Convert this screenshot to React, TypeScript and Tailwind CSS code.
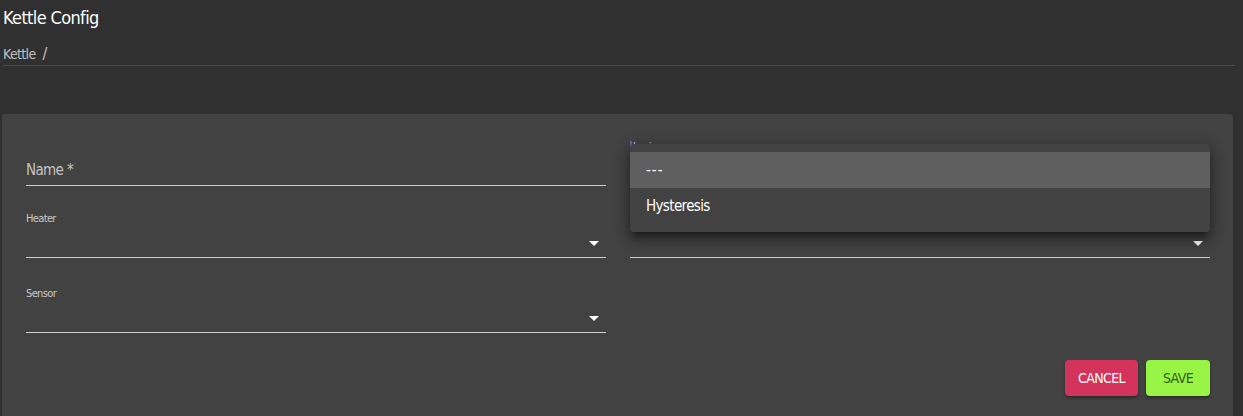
import React from "react";

const font = { fontFamily: '"DejaVu Sans Condensed", "Liberation Sans", sans-serif', letterSpacing: "-0.04em" };

function Arrow() {
  return (
    <svg width="10" height="5" viewBox="0 0 10 5" className="absolute right-[7px] bottom-[11px]">
      <path d="M0 0 L10 0 L5 5 Z" fill="#ffffff" />
    </svg>
  );
}

function SelectField({ label }: { label: string }) {
  return (
    <div className="flex flex-col">
      <div className="text-[11px] leading-[13px] text-[#c8c8c8] h-[13px]">{label}</div>
      <div className="relative h-[33px] border-b border-[#d0d0d0]">
        <Arrow />
      </div>
    </div>
  );
}

export default function App() {
  return (
    <div className="w-full h-[416px] bg-[#303030] overflow-hidden text-white" style={font}>
      <div className="pl-[3px] pr-[8px]">
        <div className="text-[18px] leading-[24px] pt-[6px] text-white">Kettle Config</div>
        <div className="flex items-center gap-[7px] text-[14px] leading-[18px] pt-[15px] pb-[2px] text-[#c0c0c0]">
          <span>Kettle</span>
          <span className="text-[16px]">/</span>
        </div>
        <div className="h-[1px] bg-[#4a4a4a] mr-0 w-[1232px]"></div>
      </div>
      <div className="mt-[48px] ml-[2px] w-[1231px] h-[320px] bg-[#424242] rounded-t-[4px] pl-[24px] pr-[23px] pt-[26px] relative">
        <div className="grid grid-cols-2 gap-x-[24px]">
          <div className="flex flex-col">
            <div className="pt-[4px] h-[46px] flex items-end border-b border-[#d0d0d0] pb-[5px]">
              <span className="text-[15px] leading-[20px] text-[#c4c4c4]">Name *</span>
            </div>
            <div className="mt-[26px]"><SelectField label="Heater" /></div>
            <div className="mt-[29px]"><SelectField label="Sensor" /></div>
          </div>
          <div className="flex flex-col">
            <div className="flex flex-col">
              <div className="text-[11px] leading-[13px] text-[#c8c8c8] h-[13px] relative">
                <span className="absolute left-0 top-[1px] w-[2px] h-[10px] bg-[#6a5acd]"></span>
                <span className="pl-[3px]">Logic</span>
              </div>
              <div className="relative h-[33px] border-b border-[#d0d0d0]"><Arrow /></div>
            </div>
            <div className="mt-[26px]"><SelectField label="Agitator" /></div>
          </div>
        </div>
        <div className="absolute right-[23px] top-[246px] flex gap-[8px]">
          <button className="h-[36px] w-[73px] rounded-[4px] bg-[#d4335b] text-white text-[14px] shadow-[0_2px_3px_rgba(0,0,0,0.35)]">CANCEL</button>
          <button className="h-[36px] w-[64px] rounded-[4px] bg-[#98f545] text-[#365a18] text-[14px] shadow-[0_2px_3px_rgba(0,0,0,0.35)]">SAVE</button>
        </div>
        <div className="absolute left-[628px] top-[30px] w-[580px] bg-[#424242] rounded-[4px] py-[8px] shadow-[0_5px_6px_-3px_rgba(0,0,0,0.4),0_8px_12px_1px_rgba(0,0,0,0.25),0_3px_16px_2px_rgba(0,0,0,0.2)]">
          <div className="h-[36px] bg-[#5f5f5f] flex items-center px-[16px] text-[15px] tracking-[1px]">---</div>
          <div className="h-[36px] flex items-center px-[16px] text-[15px]">Hysteresis</div>
        </div>
      </div>
    </div>
  );
}
